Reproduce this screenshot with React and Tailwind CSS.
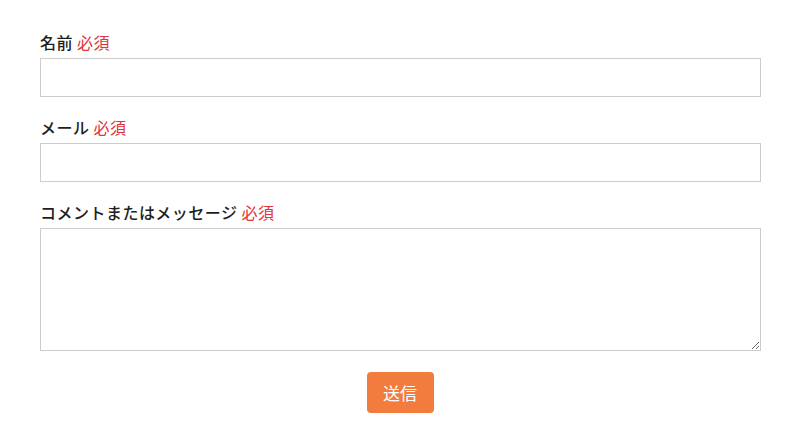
export default function App() {
  const fields = [
    { label: '名前', type: 'input' },
    { label: 'メール', type: 'input' },
    { label: 'コメントまたはメッセージ', type: 'textarea' },
  ];

  return (
    <div className="min-h-[442px] bg-white px-10 pt-[30px] font-['Noto_Sans_CJK_JP','Noto_Sans',sans-serif] text-[#1e1e1e]">
      <form onSubmit={(e) => e.preventDefault()}>
        {fields.map((field) => (
          <div key={field.label} className="mb-[18px]">
            <label className="mb-1 block h-6 text-[16px] font-medium leading-6 tracking-[0.03em]">
              {field.label} <span className="font-normal text-[#e2343b]">必須</span>
            </label>
            {field.type === 'input' ? (
              <input
                type="text"
                className="block h-[39px] w-[721px] border border-[#cccccc] bg-white px-2 text-[15px] outline-none"
              />
            ) : (
              <textarea className="block h-[123px] w-[721px] resize border border-[#cccccc] bg-white px-2 py-1 text-[15px] outline-none" />
            )}
          </div>
        ))}
        <div className="flex justify-center pt-[3px]">
          <button
            type="submit"
            className="h-[41px] w-[67px] rounded-[4px] bg-[#f17c3e] text-[17px] leading-none text-white"
          >
            送信
          </button>
        </div>
      </form>
    </div>
  );
}
